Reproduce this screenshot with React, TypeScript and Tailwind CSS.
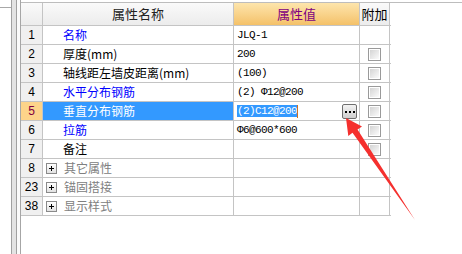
const cjk = "font-['SimSun','Noto_Sans_CJK_SC',sans-serif]";
const mono = "font-['Liberation_Mono',monospace] text-[11px] tracking-[-0.6px]";

type Row = {
  no: string;
  name: string;
  value?: string;
  kind: "blue" | "black" | "group";
  check?: boolean;
  selected?: boolean;
};

const rows: Row[] = [
  { no: "1", name: "名称", value: "JLQ-1", kind: "blue" },
  { no: "2", name: "厚度(mm)", value: "200", kind: "black", check: true },
  { no: "3", name: "轴线距左墙皮距离(mm)", value: "(100)", kind: "black", check: true },
  { no: "4", name: "水平分布钢筋", value: "(2) Φ12@200", kind: "blue", check: true },
  { no: "5", name: "垂直分布钢筋", value: "(2)C12@200", kind: "blue", check: true, selected: true },
  { no: "6", name: "拉筋", value: "Φ6@600*600", kind: "blue", check: true },
  { no: "7", name: "备注", value: "", kind: "black", check: true },
  { no: "8", name: "其它属性", kind: "group" },
  { no: "23", name: "锚固搭接", kind: "group" },
  { no: "38", name: "显示样式", kind: "group" },
];

function CheckBox() {
  return (
    <div className="h-[13px] w-[13px] border border-[#9a9a9a] bg-white p-[1px]">
      <div className="h-full w-full bg-gradient-to-br from-[#d4d4d4] to-[#fbfbfb]" />
    </div>
  );
}

function PlusBox() {
  return (
    <div className="relative ml-[3px] mr-[7px] h-[11px] w-[11px] border border-[#8a8a8a] bg-gradient-to-b from-white to-[#e2e2e2]">
      <div className="absolute left-[2px] top-[4px] h-[1px] w-[5px] bg-black" />
      <div className="absolute left-[4px] top-[2px] h-[5px] w-[1px] bg-black" />
    </div>
  );
}

function EllipsisButton() {
  return (
    <div className="flex h-[15px] w-[15px] items-center justify-center gap-[2px] rounded-[2px] border border-[#6f6f6f] bg-gradient-to-b from-[#f4f4f4] to-[#cfcfcf] pt-[1px]">
      <div className="h-[2px] w-[2px] bg-black" />
      <div className="h-[2px] w-[2px] bg-black" />
      <div className="h-[2px] w-[2px] bg-black" />
    </div>
  );
}

function TableRow({ row }: { row: Row }) {
  const nameColor =
    row.kind === "blue" ? "text-[#0000ff]" : row.kind === "group" ? "text-[#808080]" : "text-black";
  return (
    <div className="flex h-[19px] border-b border-[#c4c4c4]">
      <div
        className={`flex w-[22px] items-center justify-center border-r border-[#c4c4c4] font-['Liberation_Sans',sans-serif] text-[12px] ${
          row.selected ? "bg-[#fdd48a] text-[#800040]" : "bg-[#f0f0f0] text-black"
        }`}
      >
        {row.no}
      </div>
      <div
        className={`flex w-[191px] items-center border-r border-[#c4c4c4] ${cjk} text-[12px] ${
          row.selected ? "bg-[#3399ff] text-white" : nameColor
        } ${row.kind === "group" ? "pl-0" : "pl-[20px]"}`}
      >
        {row.kind === "group" && <PlusBox />}
        {row.name}
      </div>
      <div className={`flex w-[126px] items-center border-r border-[#c4c4c4] pl-[3px] ${mono} text-black`}>
        {row.selected ? (
          <>
            <span className="bg-[#3399ff] text-white leading-[12px]">{row.value}</span>
            <span className="h-[13px] w-[1px] bg-[#d07020]" />
            <span className="ml-auto mr-[2px]">
              <EllipsisButton />
            </span>
          </>
        ) : (
          row.value
        )}
      </div>
      <div className="flex w-[30px] items-center justify-center border-r border-[#c4c4c4]">
        {row.check && <CheckBox />}
      </div>
    </div>
  );
}

export default function App() {
  return (
    <div className="relative flex h-[254px] w-[462px] overflow-hidden bg-white">
      {/* left frame */}
      <div className="flex h-full">
        <div className="w-[11px] pt-[7px]">
          <div className="h-[1px] w-full bg-[#a8a8a8]" />
        </div>
        <div className="w-[1px] bg-[#a0a0a0]" />
        <div className="w-[4px] bg-[#e3e3e3]" />
        <div className="w-[1px] bg-[#a0a0a0]" />
        <div className="w-[3px] bg-[#fafafa]" />
      </div>

      <div className="flex-1 border-l border-[#a6a6a6] pt-[2px]">
        <div className="border-t border-[#bdbdbd]">
          <div className="w-[370px]">
            <div className={`flex h-[23px] border-b border-[#c4c4c4] ${cjk} text-[13px]`}>
              <div className="w-[22px] border-r border-[#c4c4c4] bg-gradient-to-b from-[#fafafa] to-[#ececec]" />
              <div className="flex w-[191px] items-center justify-center border-r border-[#c4c4c4] bg-gradient-to-b from-[#fafafa] to-[#ececec] text-[#222]">
                属性名称
              </div>
              <div className="flex w-[126px] items-center justify-center border-r border-[#c4c4c4] bg-gradient-to-b from-[#fde5ac] to-[#f4c168] text-[#800080]">
                属性值
              </div>
              <div className="flex w-[30px] items-center justify-center border-r border-[#c4c4c4] bg-gradient-to-b from-[#fafafa] to-[#ececec] text-black">
                附加
              </div>
            </div>
            {rows.map((r) => (
              <TableRow key={r.no} row={r} />
            ))}
          </div>
        </div>
      </div>

      {/* red annotation arrow */}
      <svg className="pointer-events-none absolute left-0 top-0" width="462" height="254" viewBox="0 0 462 254">
        <polygon
          points="346,118 362,126.5 357.5,129.5 415,220 352.5,132.8 348.3,136"
          fill="#f5302e"
        />
      </svg>
    </div>
  );
}
